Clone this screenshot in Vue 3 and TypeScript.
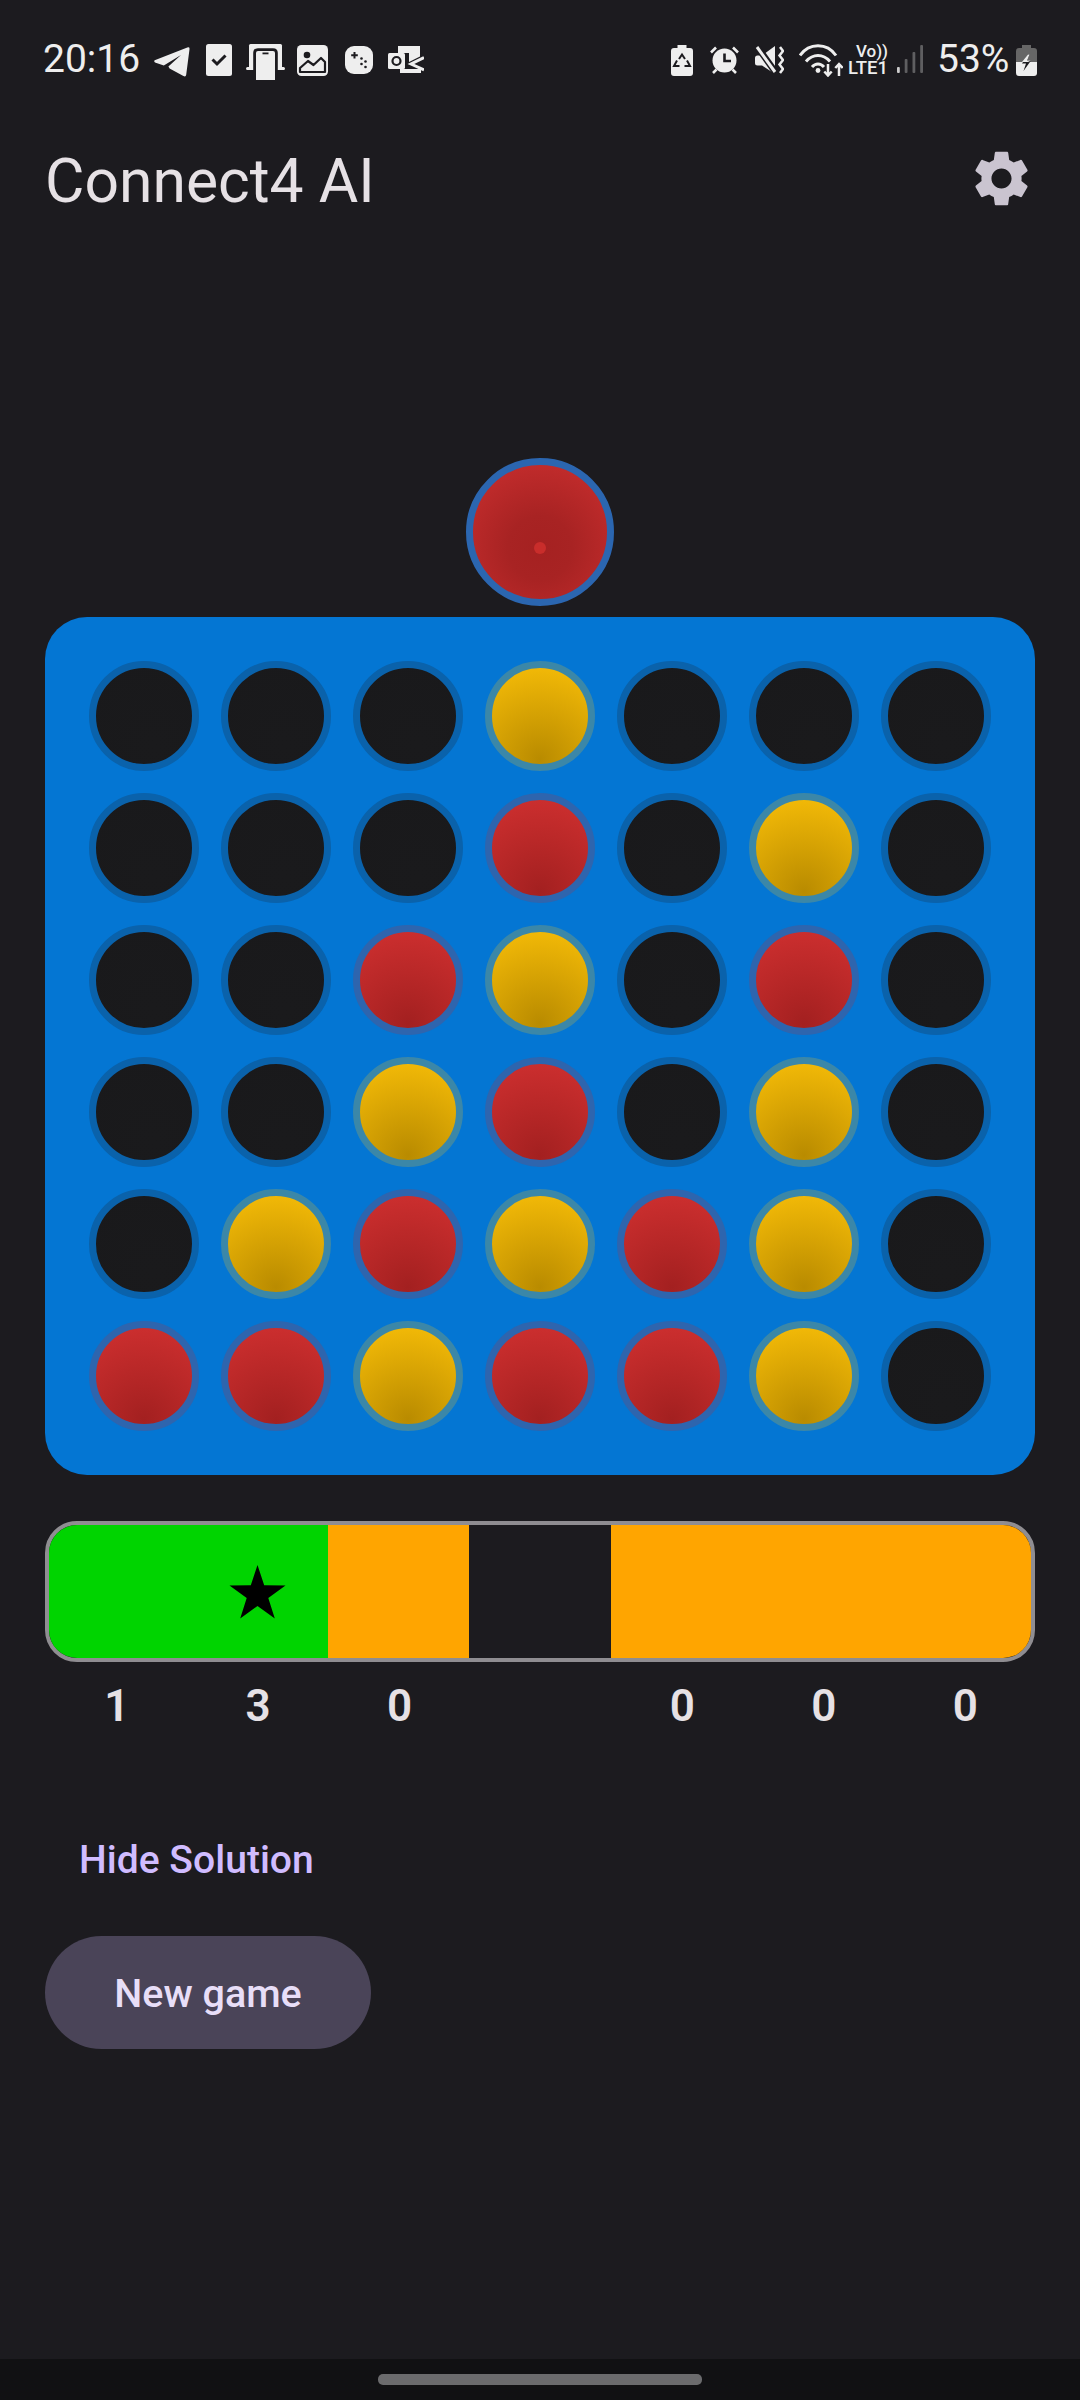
<script setup lang="ts">
type Piece = 'e' | 'r' | 'y'

const board: Piece[][] = [
  ['e', 'e', 'e', 'y', 'e', 'e', 'e'],
  ['e', 'e', 'e', 'r', 'e', 'y', 'e'],
  ['e', 'e', 'r', 'y', 'e', 'r', 'e'],
  ['e', 'e', 'y', 'r', 'e', 'y', 'e'],
  ['e', 'y', 'r', 'y', 'r', 'y', 'e'],
  ['r', 'r', 'y', 'r', 'r', 'y', 'e'],
]
const cells = board.flat()

const solution = ['green', 'green', 'orange', 'none', 'orange', 'orange', 'orange']
const scores = ['1', '3', '0', '', '0', '0', '0']
</script>

<template>
  <div class="page">
    <div class="status">
      <div class="status-left">
        <span class="time">20:16</span>
        <svg class="i-telegram" width="36" height="30" viewBox="0 0 36 30"><path fill="#eee" d="M0.7 13.200 33.300 0.500Q35.800 -0.300 35.500 2.200L32.200 27.800Q31.800 30.300 29.400 29L15.600 21.600 14.400 19.400 27 8 9.800 18.600 1 15.500Q-0.500 14 0.700 13.200Z"/></svg>
        <svg class="i-check" width="26" height="32" viewBox="0 0 26 32"><rect width="26" height="32" rx="2.500" fill="#eee"/><path d="M6.500 15.500 11 20 19.500 11.500" fill="none" stroke="#1c1b1f" stroke-width="3"/></svg>
        <svg class="i-dex" width="39" height="36" viewBox="0 0 39 36"><path fill="#eee" d="M3 1.500Q3 0 4.500 0H34.500Q36 0 36 1.500V23H3Z"/><rect y="23" width="39" height="3" rx="1.500" fill="#eee"/><path d="M7.200 36V9Q7.200 4.200 12 4.200H27Q31.800 4.200 31.800 9V36Z" fill="#1c1b1f"/><path d="M10 36V9Q10 7 12 7H27Q29 7 29 9V36Z" fill="#eee"/><rect x="16.500" y="8.500" width="6" height="1.800" fill="#1c1b1f"/></svg>
        <svg class="i-image" width="31" height="31" viewBox="0 0 31 31"><rect width="31" height="31" rx="4.500" fill="#eee"/><circle cx="10" cy="10" r="3.300" fill="#1c1b1f"/><path d="M3 27V23L11 16 16.500 20 24 13 28 17V27Z" fill="#eee" stroke="#1c1b1f" stroke-width="2.200" stroke-linejoin="round"/></svg>
        <svg class="i-game" width="28" height="28" viewBox="0 0 28 28"><rect width="28" height="28" rx="9" fill="#eee"/><path d="M9.500 6V12.500M6.200 9.300H12.800" stroke="#1c1b1f" stroke-width="2"/><g fill="#1c1b1f"><circle cx="16.500" cy="12.500" r="1.300"/><circle cx="20.500" cy="15.500" r="1.300"/><circle cx="16.500" cy="18" r="1.300"/><circle cx="20.500" cy="21" r="1.300"/></g></svg>
        <svg class="i-outlook" width="36" height="27" viewBox="0 0 36 27"><path fill="#eee" d="M10 0H32V10.500L21 16V7H10ZM12 23H33V27H12Z"/><path d="M36 11.500 23 18 36 24" fill="none" stroke="#eee" stroke-width="3"/><rect x="0" y="7" width="17" height="16" rx="1.500" fill="#eee"/><circle cx="8.500" cy="15" r="4" fill="none" stroke="#1c1b1f" stroke-width="2.200"/></svg>
      </div>
      <div class="status-right">
        <svg class="i-recycle" width="22" height="31" viewBox="0 0 22 31"><path fill="#eee" d="M6.500 0H15.500V3H19Q22 3 22 6V28Q22 31 19 31H3Q0 31 0 28V6Q0 3 3 3H6.500Z"/><path d="M8 14 11 9.500 14 14M16 15.500 19 21H13.500M8.500 21H3L6 15.500" fill="none" stroke="#1c1b1f" stroke-width="2"/></svg>
        <svg class="i-alarm" width="29" height="28" viewBox="0 0 29 28"><circle cx="14.500" cy="14.500" r="12" fill="#eee"/><path d="M14.500 7.500V15H21" fill="none" stroke="#1c1b1f" stroke-width="2.600"/><path d="M1 6.500 6 1.500M28 6.500 23 1.500M3 27 6.500 23.500M26 27 22.500 23.500" stroke="#eee" stroke-width="2.600"/></svg>
        <svg class="i-mute" width="29" height="28" viewBox="0 0 29 28"><path fill="#eee" d="M0 12Q0 9.500 2.500 9.500H7L20 0V28L7 19.500H2.500Q0 19.500 0 17Z"/><path d="M1 -1 21 27" stroke="#1c1b1f" stroke-width="6.500"/><path d="M2 1 20 26" stroke="#eee" stroke-width="3"/><path d="M25 1 28 5 24.500 9.500 28 14 24.500 18.500 28 23 25 27" fill="none" stroke="#eee" stroke-width="2.500"/></svg>
        <svg class="i-wifi" width="44" height="33" viewBox="0 0 44 33"><g fill="none" stroke="#eee" stroke-width="3"><path d="M1 11.500C10 -1.500 28 -1.500 37 11.500"/><path d="M7 17.500C14 9.500 24 9.500 31 17.500"/><path d="M13 23C16.500 19 21.500 19 25 23"/></g><circle cx="19" cy="26.500" r="2.400" fill="#eee"/><path d="M29 20V31.500M25.300 27.500 29 31.500 32.700 27.500M40 32V20M36.300 24 40 20 43.700 24" fill="none" stroke="#eee" stroke-width="2.500"/></svg>
        <div class="volte"><span class="vo">Vo))</span><span class="lte">LTE1</span></div>
        <svg class="i-signal" width="26" height="28" viewBox="0 0 26 28"><rect y="22" width="2.800" height="6" rx="1" fill="#ccc"/><rect x="7.700" y="14" width="2.800" height="14" rx="1" fill="#5f5f61"/><rect x="15.500" y="7" width="2.800" height="21" rx="1" fill="#5f5f61"/><rect x="23.200" y="0" width="2.800" height="28" rx="1" fill="#5f5f61"/></svg>
        <span class="percent">53%</span>
        <svg class="i-battery" width="21" height="31" viewBox="0 0 21 31"><path fill="#666" d="M6 0H15V3H18Q21 3 21 6V17H0V6Q0 3 3 3H6Z"/><path fill="#eee" d="M0 17H21V28Q21 31 18 31H3Q0 31 0 28Z"/><path fill="#1c1b1f" d="M12 9.500 6 18.500H10L7.500 26 15 15.500H11L13.500 9.500Z"/><path fill="#eee" d="M12 9.500 6 17H12.100L15 15.500H11L13.500 9.500Z"/></svg>
      </div>
    </div>

    <header class="header">
      <h1 class="title">Connect4 AI</h1>
      <svg class="gear" width="67" height="67" viewBox="0 0 24 24"><path fill="#cac4d0" fill-rule="evenodd" d="M19.14 12.94c.04-.3.06-.61.06-.94 0-.32-.02-.64-.07-.94l2.03-1.58c.18-.14.23-.41.12-.61l-1.92-3.32c-.12-.22-.37-.29-.59-.22l-2.39.96c-.5-.38-1.03-.7-1.62-.94l-.36-2.54c-.04-.24-.24-.41-.48-.41h-3.84c-.24 0-.43.17-.47.41l-.36 2.54c-.59.24-1.13.57-1.62.94l-2.39-.96c-.22-.08-.47 0-.59.22L2.74 8.87c-.12.21-.08.47.12.61l2.03 1.58c-.05.3-.09.63-.09.94s.02.64.07.94l-2.03 1.58c-.18.14-.23.41-.12.61l1.92 3.32c.12.22.37.29.59.22l2.39-.96c.5.38 1.03.7 1.62.94l.36 2.54c.05.24.24.41.48.41h3.84c.24 0 .44-.17.47-.41l.36-2.54c.59-.24 1.13-.56 1.62-.94l2.39.96c.22.08.47 0 .59-.22l1.92-3.32c.12-.22.07-.47-.12-.61l-2.01-1.58zM12 15.6c-1.98 0-3.6-1.62-3.6-3.6s1.62-3.6 3.6-3.6 3.6 1.62 3.6 3.6-1.62 3.6-3.6 3.6z"/></svg>
    </header>

    <div class="drop">
      <div class="drop-disc"><span class="drop-dot"></span></div>
    </div>

    <div class="board">
      <div v-for="(cell, i) in cells" :key="i" class="cell">
        <div class="disc" :class="cell"></div>
      </div>
    </div>

    <div class="bar">
      <div v-for="(seg, i) in solution" :key="i" class="seg" :class="seg">
        <svg v-if="i === 1" width="57" height="54" viewBox="0 0 57 54"><path d="M28.500 0 35.200 20.300 56.500 20.400 39.300 33 45.800 53.500 28.500 41 11.200 53.500 17.700 33 0.500 20.400 21.800 20.300Z" fill="#000"/></svg>
      </div>
    </div>

    <div class="scores">
      <span v-for="(score, i) in scores" :key="i" class="score">{{ score }}</span>
    </div>

    <button class="text-btn">Hide Solution</button>
    <button class="tonal-btn">New game</button>

    <div class="nav"><span class="pill"></span></div>
  </div>
</template>

<style>
html, body { margin: 0; background: #1c1b1f; }
</style>

<style scoped>
.page {
  width: 1080px;
  height: 2400px;
  background: #1c1b1f;
  display: flex;
  flex-direction: column;
  font-family: Roboto, "Liberation Sans", sans-serif;
  overflow: hidden;
}
.status {
  height: 120px;
  box-sizing: border-box;
  padding: 0 43px;
  display: flex;
  justify-content: space-between;
  align-items: center;
  color: #eee;
}
.status-left, .status-right { display: flex; align-items: center; }
.time { font-size: 39px; width: 111px; line-height: 40px; margin-top: -2px; }
.i-telegram { margin-top: 4px; }
.i-check { margin-left: 16px; }
.i-dex { margin-left: 14px; margin-top: 4px; }
.i-image { margin-left: 12px; margin-top: 1px; }
.i-game { margin-left: 17px; }
.i-outlook { margin-left: 15px; margin-top: -1px; }
.i-alarm { margin-left: 17px; }
.i-mute { margin-left: 16px; }
.i-wifi { margin-left: 15px; }
.volte {
  margin-left: 6px;
  width: 38px;
  display: flex;
  flex-direction: column;
  align-items: center;
  font-weight: 500;
}
.vo { font-size: 17px; line-height: 17px; padding-left: 8px; white-space: nowrap; }
.lte { font-size: 18.5px; line-height: 17px; white-space: nowrap; }
.i-signal { margin-left: 10px; margin-top: -2px; }
.percent { margin-left: 14px; width: 79px; font-size: 39px; line-height: 40px; margin-top: -2px; white-space: nowrap; }

.header {
  height: 120px;
  box-sizing: border-box;
  padding: 0 45px;
  display: flex;
  justify-content: space-between;
  align-items: center;
}
.title {
  margin: 4px 0 0;
  font-size: 60.6px;
  font-weight: 400;
  color: #e6e1e5;
  line-height: 70px;
}
.gear { margin-top: -4px; }

.drop {
  margin-top: 218px;
  display: flex;
  justify-content: center;
}
.drop-disc {
  width: 134px;
  height: 134px;
  border: 7px solid #2b66b0;
  border-radius: 50%;
  background: radial-gradient(circle at 50% 62%, #a52121 0%, #a82323 30%, #cb2f2f 100%);
  position: relative;
}
.drop-dot {
  position: absolute;
  left: 61px;
  top: 77px;
  width: 12px;
  height: 12px;
  border-radius: 50%;
  background: #c92d2b;
}

.board {
  margin: 11px 45px 0;
  width: 990px;
  height: 858px;
  box-sizing: border-box;
  padding: 33px;
  border-radius: 42px;
  background: #0476d3;
  display: grid;
  grid-template-columns: repeat(7, 132px);
  grid-template-rows: repeat(6, 132px);
}
.cell { display: flex; align-items: center; justify-content: center; }
.disc { width: 96px; height: 96px; border-radius: 50%; border: 7px solid; }
.disc.e {
  border-color: #0a62ab;
  background: radial-gradient(circle at 60% 80%, #1a1a1c, #19191b);
}
.disc.r {
  border-color: #2e65ae;
  background: radial-gradient(circle at 50% 95%, #a32020 0%, #d03030 100%);
}
.disc.y {
  border-color: #3b87a8;
  background: radial-gradient(circle at 50% 95%, #b98b00 0%, #f8be08 100%);
}

.bar {
  margin: 46px 45px 0;
  width: 990px;
  height: 141px;
  box-sizing: border-box;
  border: 4px solid #8f8d91;
  border-radius: 32px;
  overflow: hidden;
  display: grid;
  grid-template-columns: 137.4px 141.4px 141.4px 141.6px 141.4px 141.4px 137.4px;
}
.seg { display: flex; align-items: center; justify-content: center; }
.seg.green { background: #00d400; }
.seg.orange { background: #ffa500; }
.seg.none { background: #1c1b1f; }

.scores {
  margin: 20px 44px 0 46px;
  width: 990px;
  display: grid;
  grid-template-columns: repeat(7, 1fr);
}
.score {
  height: 48px;
  line-height: 48px;
  text-align: center;
  font-size: 44px;
  font-weight: 600;
  color: #e6e1e5;
}

.text-btn {
  margin: 81px 0 0 45px;
  align-self: flex-start;
  height: 96px;
  padding: 2px 34px 0;
  border: 0;
  background: transparent;
  color: #d0bcff;
  font: 500 39.1px Roboto, "Liberation Sans", sans-serif;
}
.tonal-btn {
  margin: 29px 0 0 45px;
  align-self: flex-start;
  width: 326px;
  height: 113px;
  padding: 2px 0 0;
  border: 0;
  border-radius: 57px;
  background: #4a4458;
  color: #e8def8;
  font: 500 39.5px Roboto, "Liberation Sans", sans-serif;
}
.nav {
  margin-top: auto;
  height: 41px;
  background: #111113;
  display: flex;
  justify-content: center;
}
.pill {
  margin-top: 15px;
  width: 324px;
  height: 11px;
  border-radius: 5px;
  background: #6b6b6d;
}
</style>
